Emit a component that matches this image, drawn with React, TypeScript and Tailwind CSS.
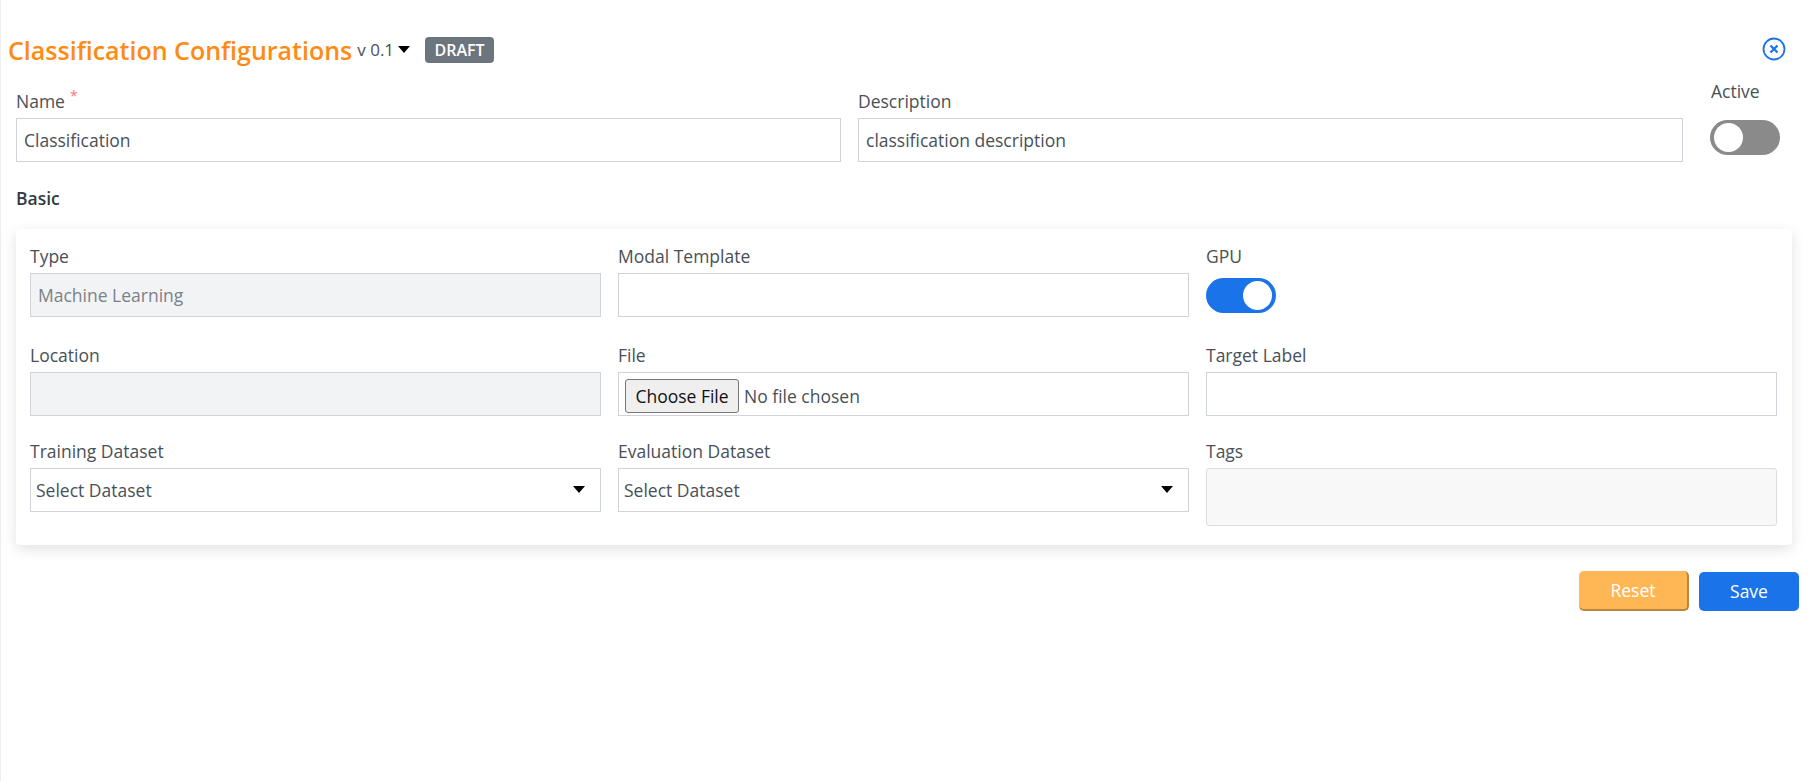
const labelCls = "block text-[#495057] text-[17.500px] leading-[24px]";
const inputCls =
  "block w-full h-[44px] border border-[#ced4da] px-[7px] text-[17.500px] text-[#495057] outline-none";

function Field({ label, children }: { label: string; children: React.ReactNode }) {
  return (
    <div>
      <label className={`${labelCls} mb-[5px]`}>{label}</label>
      {children}
    </div>
  );
}

function Toggle({ on }: { on: boolean }) {
  return (
    <div
      className={`flex items-center w-[70px] h-[35px] rounded-full px-[4px] ${
        on ? "bg-[#1a73e8] justify-end" : "bg-[#8a8a8a] justify-start"
      }`}
    >
      <span className="block w-[29px] h-[29px] rounded-full bg-white" />
    </div>
  );
}

function Caret() {
  return (
    <svg width="12" height="7" viewBox="0 0 12 7" className="absolute right-[16px] top-[18px]">
      <path d="M0 0h12L6 7z" fill="#000" />
    </svg>
  );
}

function DatasetSelect() {
  return (
    <div className="relative">
      <select className={`${inputCls} bg-white appearance-none !px-[5px]`} defaultValue="">
        <option value="">Select Dataset</option>
      </select>
      <Caret />
    </div>
  );
}

export default function App() {
  return (
    <div
      className="relative min-h-[781px] bg-white pl-[15px] pr-[16px] border-l border-[#eeeeee]"
      style={{ fontFamily: '"Open Sans", sans-serif' }}
    >
      <div className="flex items-center h-[44px] pt-[28px] pb-[1px] -ml-[8px] box-content">
        <h1 className="text-[25px] font-semibold text-[#ff8a14] leading-[32px]">Classification Configurations</h1>
        <span className="ml-[5px] text-[17px] text-[#495057]">v 0.1</span>
        <svg width="12" height="7" viewBox="0 0 12 7" className="ml-[4px] -mt-[2px]">
          <path d="M0 0h12L6 7z" fill="#000" />
        </svg>
        <span className="ml-[15px] rounded-[4px] bg-[#6c757d] w-[69px] text-center h-[26px] leading-[26px] text-[16px] font-semibold text-white">
          DRAFT
        </span>
        <button className="ml-auto mr-[13px] -mt-[3px] text-[#1a73e8]" aria-label="Close">
          <svg width="24" height="24" viewBox="0 0 24 24" fill="none" stroke="currentColor">
            <circle cx="12" cy="12" r="10.500" strokeWidth="1.800" />
            <path d="M8.500 8.500l7 7M15.500 8.500l-7 7" strokeWidth="2.200" />
          </svg>
        </button>
      </div>

      <div className="flex gap-[17px] mt-[16px]">
        <div className="w-[825px]">
          <label className={`${labelCls} mb-[5px]`}>
            Name
            <span className="ml-[5px] align-top leading-none text-[#f7767a] text-[14px]">*</span>
          </label>
          <input className={`${inputCls} bg-white`} defaultValue="Classification" />
        </div>
        <div className="w-[825px]">
          <label className={`${labelCls} mb-[5px]`}>Description</label>
          <input className={`${inputCls} bg-white`} defaultValue="classification description" />
        </div>
        <div className="ml-[11px] -mt-[10px]">
          <label className={`${labelCls} mb-[17px]`}>Active</label>
          <div className="-ml-[1px]">
            <Toggle on={false} />
          </div>
        </div>
      </div>

      <h2 className="mt-[24px] text-[17.500px] leading-[24px] font-semibold text-[#343a40]">Basic</h2>

      <div className="mt-[19px] w-[1776px] h-[316px] rounded-[4px] bg-white px-[14px] pt-[15px] shadow-[0_4px_14px_rgba(0,0,0,0.12)]">
        <div className="grid grid-cols-[571px_571px_571px] gap-x-[17px]">
          <div className="h-[99px]">
            <Field label="Type">
              <input className={`${inputCls} bg-[#f2f3f5] !text-[#7a8288]`} defaultValue="Machine Learning" disabled />
            </Field>
          </div>
          <div className="h-[99px]">
            <Field label="Modal Template">
              <input className={`${inputCls} bg-white`} />
            </Field>
          </div>
          <div className="h-[99px]">
            <Field label="GPU">
              <div className="pt-[5px]">
                <Toggle on />
              </div>
            </Field>
          </div>

          <div className="h-[96px]">
            <Field label="Location">
              <input className={`${inputCls} bg-[#f2f3f5]`} disabled />
            </Field>
          </div>
          <div className="h-[96px]">
            <Field label="File">
              <input
                type="file"
                className={`${inputCls} bg-white !px-[6px] pt-[6px] file:h-[34px] file:w-[114px] file:mr-[5px] file:rounded-[3px] file:border file:border-[#767676] file:bg-[#efefef] file:text-[#111] file:text-[17.500px]`}
              />
            </Field>
          </div>
          <div className="h-[96px]">
            <Field label="Target Label">
              <input className={`${inputCls} bg-white`} />
            </Field>
          </div>

          <Field label="Training Dataset">
            <DatasetSelect />
          </Field>
          <Field label="Evaluation Dataset">
            <DatasetSelect />
          </Field>
          <Field label="Tags">
            <div className="h-[58px] rounded-[3px] border border-[#dedede] bg-[#f8f8f8]" />
          </Field>
        </div>
      </div>

      <div className="flex justify-end items-center gap-[10px] mt-[26px] w-[1783px]">
        <button className="w-[110px] h-[40px] rounded-[5px] border-r-2 border-b-2 border-[#b9853f] bg-[#ffb755] text-[17.500px] text-white">
          Reset
        </button>
        <button className="w-[100px] h-[39px] rounded-[5px] bg-[#1a73e8] text-[17.500px] text-white">Save</button>
      </div>
    </div>
  );
}
